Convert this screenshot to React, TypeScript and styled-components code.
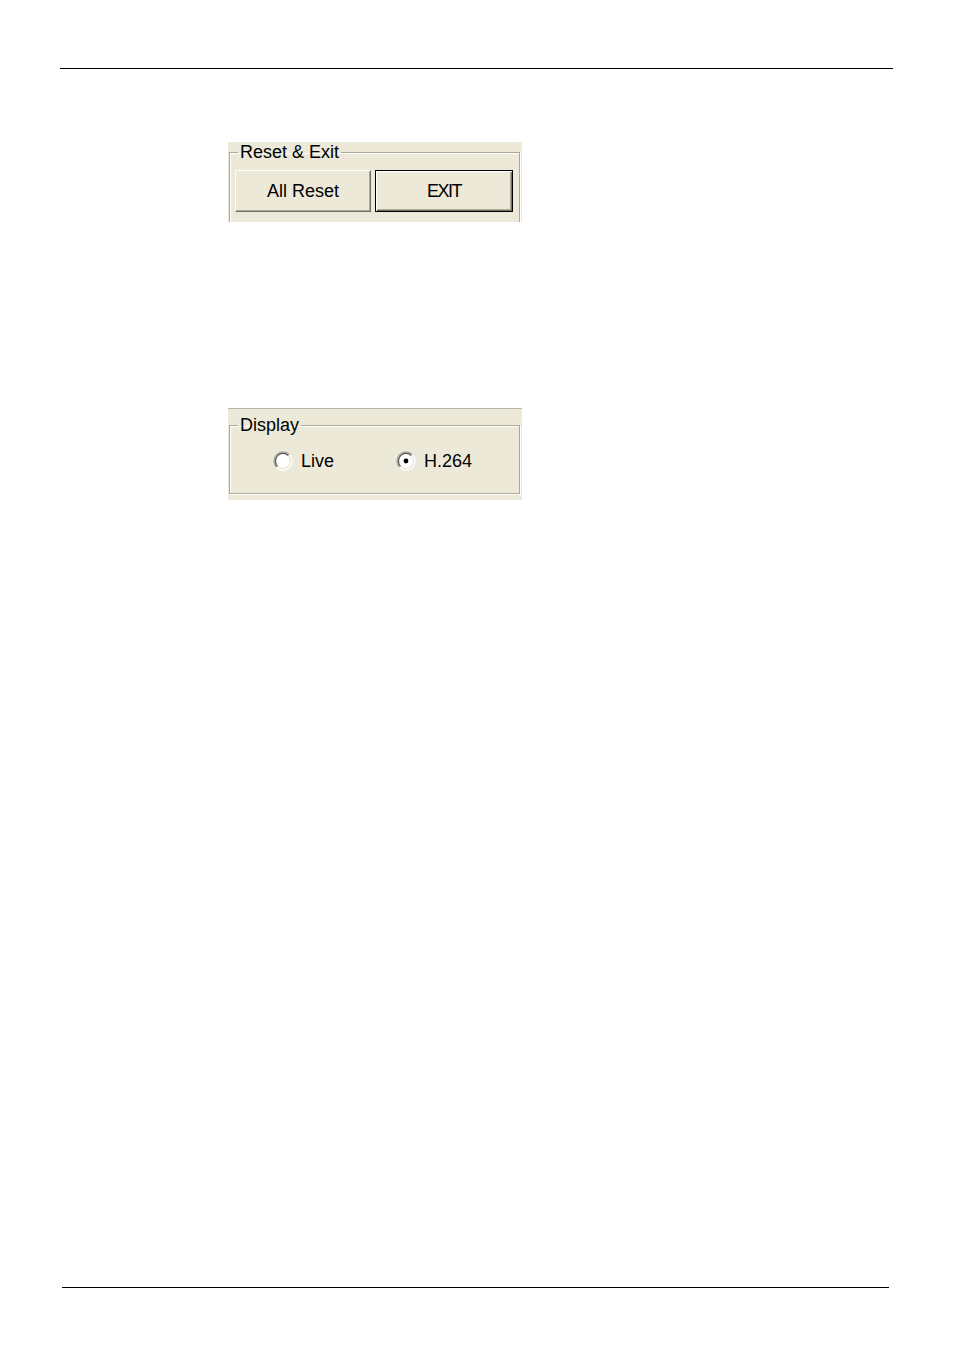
import React from "react";
import styled, { createGlobalStyle } from "styled-components";

const GlobalStyle = createGlobalStyle`
  html, body {
    margin: 0;
    padding: 0;
    background: #ffffff;
  }

  body {
    font-family: "Liberation Sans", Arial, sans-serif;
    color: #000000;
  }
`;

const Page = styled.div`
  width: 954px;
  height: 1352px;
  padding-top: 68px;
  box-sizing: border-box;
  display: flex;
  flex-direction: column;
`;

const Rule = styled.div<{ $left: number; $width: number; $top?: number }>`
  height: 1px;
  background: #000000;
  margin-left: ${(props) => props.$left}px;
  margin-top: ${(props) => props.$top ?? 0}px;
  width: ${(props) => props.$width}px;
`;

const Panel = styled.div<{ $top: number; $height: number; $ruled?: boolean }>`
  margin-top: ${(props) => props.$top}px;
  margin-left: 228px;
  width: 294px;
  height: ${(props) => props.$height}px;
  background: #ece9d8;
  overflow: hidden;
  box-sizing: border-box;
  padding-left: 1px;
  padding-top: ${(props) => (props.$ruled ? 6 : 0)}px;
  border-top: ${(props) => (props.$ruled ? "1px solid #b9b7a9" : "none")};
`;

const GroupBox = styled.fieldset<{ $height: number }>`
  margin: 0;
  width: 291px;
  height: ${(props) => props.$height}px;
  box-sizing: border-box;
  padding: 0 5px;
  border: 1px solid #aca899;
  box-shadow: inset 1px 1px 0 #ffffff, 1px 1px 0 #ffffff;
  display: flex;
  flex-direction: column;
`;

const Legend = styled.legend`
  margin-left: 3px;
  padding: 0 2px;
  font-size: 18px;
  line-height: 20px;
  color: #000000;
`;

const ButtonRow = styled.div`
  display: flex;
  gap: 4px;
  margin-top: 8px;
`;

const Button = styled.button<{ $width: number; $default?: boolean; $tight?: boolean }>`
  width: ${(props) => props.$width}px;
  height: 42px;
  margin: 0;
  padding: 0;
  box-sizing: border-box;
  background: #ece9d8;
  font-family: "Liberation Sans", Arial, sans-serif;
  font-size: 18px;
  letter-spacing: ${(props) => (props.$tight ? "-1.5px" : "0")};
  color: #000000;
  border: 1px solid;
  border-color: ${(props) =>
    props.$default ? "#000000" : "#ffffff #716f64 #716f64 #ffffff"};
  box-shadow: ${(props) =>
    props.$default
      ? "inset 1px 1px 0 #ffffff, inset -1px -1px 0 #716f64, inset -2px -2px 0 #aca899"
      : "inset -1px -1px 0 #aca899"};
`;

const RadioRow = styled.div`
  display: flex;
  align-items: center;
  margin-top: 16px;
  padding-left: 38px;
  gap: 62px;
`;

const RadioItem = styled.label`
  display: flex;
  align-items: center;
  gap: 8px;
  font-size: 18px;
  line-height: 20px;
`;

const RadioCircle = ({ checked }: { checked?: boolean }) => {
  const c = 10;
  const arc = (r: number, topLeft: boolean) => {
    const a = r * 0.7071;
    return topLeft
      ? `M ${c - a} ${c + a} A ${r} ${r} 0 0 1 ${c + a} ${c - a}`
      : `M ${c + a} ${c - a} A ${r} ${r} 0 0 1 ${c - a} ${c + a}`;
  };
  return (
    <svg width="20" height="20" viewBox="0 0 20 20">
      <circle cx={c} cy={c} r="8.5" fill="#ffffff" />
      <path d={arc(9, true)} stroke="#a7a495" strokeWidth="1.4" fill="none" />
      <path d={arc(9, false)} stroke="#ffffff" strokeWidth="1.4" fill="none" />
      <path d={arc(7.6, true)} stroke="#5a5a5a" strokeWidth="1.3" fill="none" />
      <path d={arc(7.6, false)} stroke="#e6e3d5" strokeWidth="1.3" fill="none" />
      {checked && <circle cx={c} cy={c} r="2.4" fill="#000000" />}
    </svg>
  );
};

export default function App() {
  return (
    <>
      <GlobalStyle />
      <Page>
        <Rule $left={60} $width={833} />

        <Panel $top={73} $height={80}>
          <GroupBox $height={110}>
            <Legend>Reset &amp; Exit</Legend>
            <ButtonRow>
              <Button $width={136}>All Reset</Button>
              <Button $width={138} $default $tight>
                EXIT
              </Button>
            </ButtonRow>
          </GroupBox>
        </Panel>

        <Panel $top={186} $height={92} $ruled>
          <GroupBox $height={79}>
            <Legend>Display</Legend>
            <RadioRow>
              <RadioItem>
                <RadioCircle />
                Live
              </RadioItem>
              <RadioItem>
                <RadioCircle checked />
                H.264
              </RadioItem>
            </RadioRow>
          </GroupBox>
        </Panel>

        <Rule $left={62} $width={827} $top={787} />
      </Page>
    </>
  );
}
